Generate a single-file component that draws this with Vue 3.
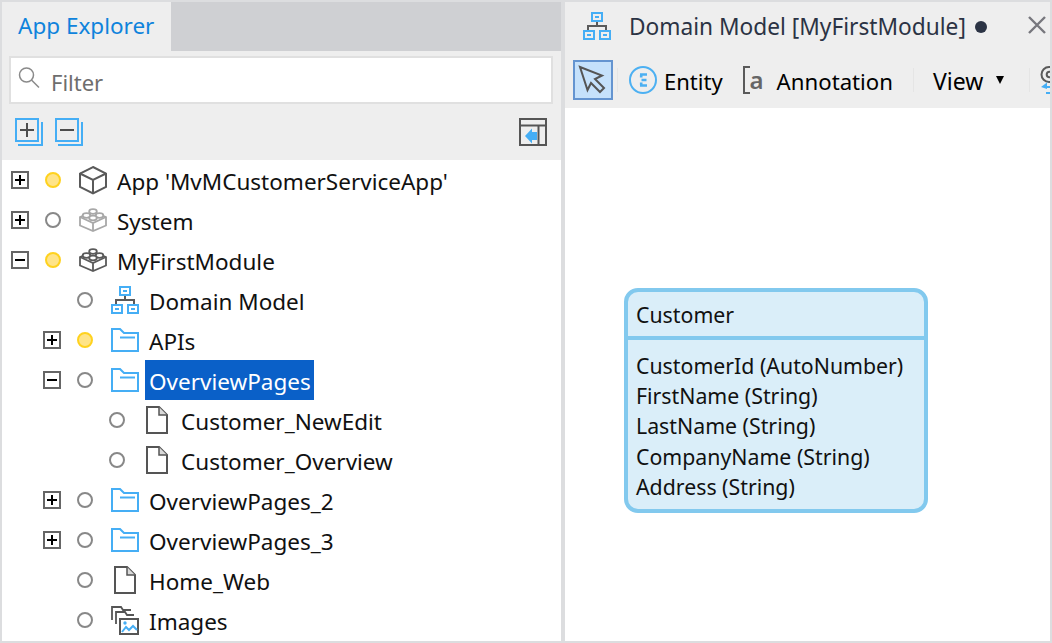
<script setup>
const rows = [
  { label: "App 'MvMCustomerServiceApp'", level: 1, exp: 'plus', dot: 'on', icon: 'cube' },
  { label: 'System', level: 1, exp: 'plus', dot: 'off', icon: 'brick-light' },
  { label: 'MyFirstModule', level: 1, exp: 'minus', dot: 'on', icon: 'brick' },
  { label: 'Domain Model', level: 2, exp: '', dot: 'off', icon: 'model' },
  { label: 'APIs', level: 2, exp: 'plus', dot: 'on', icon: 'folder' },
  { label: 'OverviewPages', level: 2, exp: 'minus', dot: 'off', icon: 'folder', selected: true },
  { label: 'Customer_NewEdit', level: 3, exp: '', dot: 'off', icon: 'page' },
  { label: 'Customer_Overview', level: 3, exp: '', dot: 'off', icon: 'page' },
  { label: 'OverviewPages_2', level: 2, exp: 'plus', dot: 'off', icon: 'folder' },
  { label: 'OverviewPages_3', level: 2, exp: 'plus', dot: 'off', icon: 'folder' },
  { label: 'Home_Web', level: 2, exp: '', dot: 'off', icon: 'page' },
  { label: 'Images', level: 2, exp: '', dot: 'off', icon: 'images' }
]
const attrs = ['CustomerId (AutoNumber)', 'FirstName (String)', 'LastName (String)', 'CompanyName (String)', 'Address (String)']
</script>

<template>
  <div class="app">
    <section class="left">
      <div class="tabs">
        <div class="tab">App Explorer</div>
      </div>
      <div class="filter">
        <svg class="search" width="22" height="22" viewBox="0 0 22 22" fill="none" stroke="#8a8a8a" stroke-width="1.5">
          <circle cx="8.500" cy="8" r="7" />
          <path d="M13.500 13L21 20.500" />
        </svg>
        <span class="filter-text">Filter</span>
      </div>
      <div class="tools">
        <svg width="28" height="28" viewBox="0 0 28 28" fill="none">
          <path d="M3 27h24V4" stroke="#45aef5" stroke-width="2" />
          <rect x="1" y="1" width="22" height="22" stroke="#45aef5" stroke-width="2" />
          <path d="M5 12h14M12 5v14" stroke="#4d4d4d" stroke-width="2" />
        </svg>
        <svg width="28" height="28" viewBox="0 0 28 28" fill="none">
          <path d="M3 27h24V4" stroke="#45aef5" stroke-width="2" />
          <rect x="1" y="1" width="22" height="22" stroke="#45aef5" stroke-width="2" />
          <path d="M5 12h14" stroke="#4d4d4d" stroke-width="2" />
        </svg>
        <svg class="collapse" width="28" height="28" viewBox="0 0 28 28" fill="none">
          <rect x="1" y="1" width="26" height="26" stroke="#555" stroke-width="2" />
          <path d="M1 7.500h26M19.500 7.500V27" stroke="#555" stroke-width="2" />
          <path d="M6 18l7-7.500V14h5v8h-5v3.500z" fill="#45aef5" />
        </svg>
      </div>
      <div class="tree">
        <div v-for="r in rows" :key="r.label" class="row" :class="'lv' + r.level">
          <span class="exp-slot">
            <span v-if="r.exp" class="exp" :class="r.exp"></span>
          </span>
          <span class="dot" :class="r.dot"></span>
          <span class="ico">
            <svg v-if="r.icon === 'cube'" width="30" height="30" viewBox="0 0 30 30" fill="none" stroke="#5a5a5a" stroke-width="2">
              <path d="M15 2L28 8.500V22L15 28.500 2 22V8.500z" />
              <path d="M2 8.500L15 15l13-6.500M15 15v13.500" />
            </svg>
            <svg v-else-if="r.icon === 'brick' || r.icon === 'brick-light'" width="30" height="24" viewBox="0 0 30 24" fill="none" :stroke="r.icon === 'brick' ? '#5a5a5a' : '#a8a8a8'" stroke-width="1.800">
              <path d="M2 9L15 4 28 9V17.500L15 23 2 17.500z" fill="#fff" />
              <path d="M2 9L15 15l13-6M15 15v8" />
              <ellipse cx="15" cy="3.500" rx="3.800" ry="2.300" fill="#fff" />
              <ellipse cx="8.500" cy="7.500" rx="3.800" ry="2.300" fill="#fff" />
              <ellipse cx="21.500" cy="7.500" rx="3.800" ry="2.300" fill="#fff" />
              <ellipse cx="15" cy="10" rx="3.800" ry="2.300" fill="#fff" />
            </svg>
            <svg v-else-if="r.icon === 'model'" width="28" height="28" viewBox="0 0 28 28" fill="none">
              <path d="M14 10v4M5 18v-4h18v4" stroke="#5a5a5a" stroke-width="2" />
              <rect x="9" y="1" width="10" height="8" stroke="#45aef5" stroke-width="2" />
              <rect x="1" y="19" width="10" height="8" stroke="#45aef5" stroke-width="2" />
              <rect x="17" y="19" width="10" height="8" stroke="#45aef5" stroke-width="2" />
              <path d="M12 5h4M4 23h4M20 23h4" stroke="#45aef5" stroke-width="2" />
            </svg>
            <svg v-else-if="r.icon === 'folder'" width="28" height="24" viewBox="0 0 28 24" fill="none" stroke="#45aef5" stroke-width="2">
              <path d="M1 1h8l4 4h14v18H1z" />
              <path d="M9 9.500h15" />
            </svg>
            <svg v-else-if="r.icon === 'page'" width="22" height="28" viewBox="0 0 22 28" fill="none" stroke="#555" stroke-width="2">
              <path d="M1 1h12l8 8v18H1z" />
              <path d="M13 1v8h8" fill="#d9d9d9" stroke-width="1.500" />
            </svg>
            <svg v-else width="28" height="29" viewBox="0 0 28 29" fill="none">
              <path d="M1 14V1h9l2 3h8" stroke="#555" stroke-width="1.800" />
              <path d="M5 18V6h9l2 3h7" stroke="#555" stroke-width="1.800" />
              <rect x="9" y="13" width="18" height="15" stroke="#555" stroke-width="2" />
              <path d="M11 26l4-5 3 3 4-4 4 4" stroke="#45aef5" stroke-width="2" />
              <circle cx="14" cy="17" r="1.700" fill="#45aef5" />
            </svg>
          </span>
          <span class="label" :class="{ selected: r.selected }">{{ r.label }}</span>
        </div>
      </div>
    </section>

    <section class="right">
      <div class="doc-head">
        <svg class="doc-ico" width="28" height="28" viewBox="0 0 28 28" fill="none">
          <path d="M14 10v4M5 18v-4h18v4" stroke="#5a5a5a" stroke-width="2" />
          <rect x="9" y="1" width="10" height="8" stroke="#45aef5" stroke-width="2" />
          <rect x="1" y="19" width="10" height="8" stroke="#45aef5" stroke-width="2" />
          <rect x="17" y="19" width="10" height="8" stroke="#45aef5" stroke-width="2" />
          <path d="M12 5h4M4 23h4M20 23h4" stroke="#45aef5" stroke-width="2" />
        </svg>
        <span class="doc-title">Domain Model [MyFirstModule]</span>
        <span class="doc-dot"></span>
        <svg class="close" width="18" height="18" viewBox="0 0 18 18" fill="none" stroke="#77777d" stroke-width="2.400">
          <path d="M1 1l16 16M17 1L1 17" />
        </svg>
      </div>
      <div class="toolbar">
        <button class="pointer" type="button" aria-label="Select">
          <svg width="30" height="30" viewBox="0 0 30 30" fill="none" stroke="#555" stroke-width="2">
            <path d="M2 2l22 8.500-7 3.500 9 9-4 4-9-9-3.500 7z" />
          </svg>
        </button>
        <span class="sep first"></span>
        <svg class="entity" width="28" height="28" viewBox="0 0 28 28" fill="none">
          <circle cx="14" cy="14" r="13" stroke="#4cb0f2" stroke-width="2" />
          <path d="M11 8.500h7M12.500 14h5M11 19.500h7M12.200 9v2.500M12.200 16.500V19" stroke="#4cb0f2" stroke-width="2.600" />
        </svg>
        <span class="tool-text entity-text">Entity</span>
        <span class="annot">
          <svg width="8" height="28" viewBox="0 0 8 28" fill="none">
            <path d="M7 1H1v26h6" stroke="#5a5a5a" stroke-width="2" />
          </svg>
          <span class="annot-a">a</span>
        </span>
        <span class="tool-text annot-text">Annotation</span>
        <span class="sep s2"></span>
        <span class="tool-text view-text">View</span>
        <span class="caret"></span>
        <span class="sep"></span>
        <svg class="sync" width="20" height="28" viewBox="0 0 20 28" fill="none">
          <circle cx="9" cy="8.500" r="7.500" stroke="#5a5a5a" stroke-width="2" />
          <circle cx="9.500" cy="8.500" r="2.800" stroke="#5a5a5a" stroke-width="2" />
          <path d="M9 15L1 21l6 2V17z" fill="#45aef5" />
          <path d="M5 21h10M6 27h10" stroke="#45aef5" stroke-width="2" />
        </svg>
      </div>
      <div class="canvas">
        <div class="entity-card">
          <div class="card-title">Customer</div>
          <div class="card-attrs">
            <div v-for="a in attrs" :key="a" class="attr">{{ a }}</div>
          </div>
        </div>
      </div>
    </section>
  </div>
</template>

<style>
html, body { margin: 0; padding: 0; background: #dedfe1; }
</style>

<style scoped>
.app {
  width: 1052px;
  height: 643px;
  box-sizing: border-box;
  padding: 2px 2px 2px 2px;
  display: flex;
  gap: 4px;
  background: #dcdddf;
  font-family: "Noto Sans", "Open Sans", sans-serif;
  font-size: 22.500px;
  color: #111;
  overflow: hidden;
}
.left {
  width: 559px;
  flex: none;
  display: flex;
  flex-direction: column;
  background: #eee;
}
.tabs {
  height: 49px;
  flex: none;
  background: #cfd0d3;
  border-bottom: 3px solid #eee;
  display: flex;
}
.tab {
  width: 153px;
  height: 52px;
  padding: 0 0 0 16px;
  background: #eee;
  color: #0e83dc;
  font-size: 22.500px;
  line-height: 48px;
}
.filter {
  flex: none;
  height: 44px;
  margin: 2px 8px 0 7px;
  border: 2px solid #e0e0e0;
  background: #fff;
  display: flex;
  align-items: center;
  padding-left: 7px;
  color: #6e6e6e;
}
.filter-text { margin-left: 11px; padding-top: 4px; font-size: 22px; }
.search { margin-top: -5px; flex: none; }
.tools {
  flex: none;
  height: 56px;
  background: #eee;
  display: flex;
  align-items: center;
  gap: 12px;
  padding-left: 13px;
}
.collapse { margin-left: auto; margin-right: 14px; }
.tree {
  flex: 1;
  background: #fff;
  overflow: hidden;
}
.row {
  height: 40px;
  display: flex;
  align-items: center;
  white-space: nowrap;
}
.lv1 { padding-left: 9px; }
.lv2 { padding-left: 41px; }
.lv3 { padding-left: 73px; }
.exp-slot { width: 18px; height: 18px; flex: none; }
.exp {
  display: block;
  width: 18px;
  height: 18px;
  box-sizing: border-box;
  border: 2px solid #666;
  background:
    linear-gradient(#000, #000) center / 10px 2px no-repeat,
    #fff;
}
.exp.plus {
  background:
    linear-gradient(#000, #000) center / 10px 2px no-repeat,
    linear-gradient(#000, #000) center / 2px 10px no-repeat,
    #fff;
}
.dot {
  width: 16px;
  height: 16px;
  box-sizing: border-box;
  border-radius: 50%;
  flex: none;
  margin-left: 16px;
}
.dot.on { background: #ffe488; border: 2px solid #ffd21f; }
.dot.off { background: #fff; border: 2px solid #888; }
.ico {
  width: 30px;
  height: 30px;
  margin-left: 17px;
  flex: none;
  display: flex;
  align-items: center;
  justify-content: center;
}
.label {
  margin-left: 5px;
  height: 40px;
  line-height: 43px;
  padding: 0 3px 0 4px;
}
.label.selected { background: #0a60c8; color: #fff; }

.right {
  flex: 1;
  display: flex;
  flex-direction: column;
  background: #fff;
  min-width: 0;
}
.doc-head {
  flex: none;
  height: 50px;
  background: #eee;
  display: flex;
  align-items: center;
  padding-left: 18px;
  color: #2b3344;
}
.doc-ico { margin-top: -2px; flex: none; }
.doc-title { margin-left: 18px; font-size: 22.700px; margin-top: -2px; }
.doc-dot {
  width: 12px;
  height: 12px;
  border-radius: 50%;
  background: #2b3344;
  margin-left: 9px;
  flex: none;
}
.close { margin-left: auto; margin-right: 4px; margin-top: -4px; flex: none; }
.toolbar {
  flex: none;
  height: 56px;
  background: #eee;
  display: flex;
  align-items: center;
  padding-left: 8px;
  overflow: hidden;
  color: #000;
}
.pointer {
  width: 40px;
  height: 40px;
  padding: 0;
  border: 2px solid #6494d0;
  background: #c5e1fb;
  display: flex;
  align-items: center;
  justify-content: center;
  flex: none;
}
.sep { width: 1px; height: 24px; background: #e5e5e5; flex: none; }
.sep.first { margin-left: 4px; }
.sep.s2 { margin-left: 20px; }
.tool-text { font-size: 22px; flex: none; padding-top: 2px; }
.entity { margin-left: 11px; flex: none; }
.entity-text { margin-left: 7px; }
.annot {
  margin-left: 20px;
  width: 22px;
  height: 28px;
  flex: none;
  display: flex;
  align-items: center;
  gap: 0;
}
.annot-a {
  font-size: 24px;
  line-height: 28px;
  font-weight: 600;
  color: #666;
  margin-left: -1px;
}
.annot-text { margin-left: 12px; font-size: 22.200px; }
.view-text { margin-left: 19px; font-size: 23px; }
.caret {
  width: 0;
  height: 0;
  border-left: 4.500px solid transparent;
  border-right: 4.500px solid transparent;
  border-top: 8px solid #000;
  margin: 0 25px 0 13px;
  flex: none;
}
.sync { flex: none; margin-left: 10px; }
.canvas {
  flex: 1;
  position: relative;
  background: #fff;
}
.entity-card {
  position: absolute;
  left: 59px;
  top: 180px;
  width: 304px;
  height: 225px;
  box-sizing: border-box;
  border: 4px solid #82c9ee;
  border-radius: 14px;
  background: #daeef9;
  line-height: 30.200px;
  font-size: 21.300px;
}
.card-title {
  height: 48px;
  box-sizing: border-box;
  padding: 8px 8px 0;
  border-bottom: 4px solid #82c9ee;
}
.card-attrs { padding: 11px 8px 0; }
.attr { height: 30.200px; }
</style>
